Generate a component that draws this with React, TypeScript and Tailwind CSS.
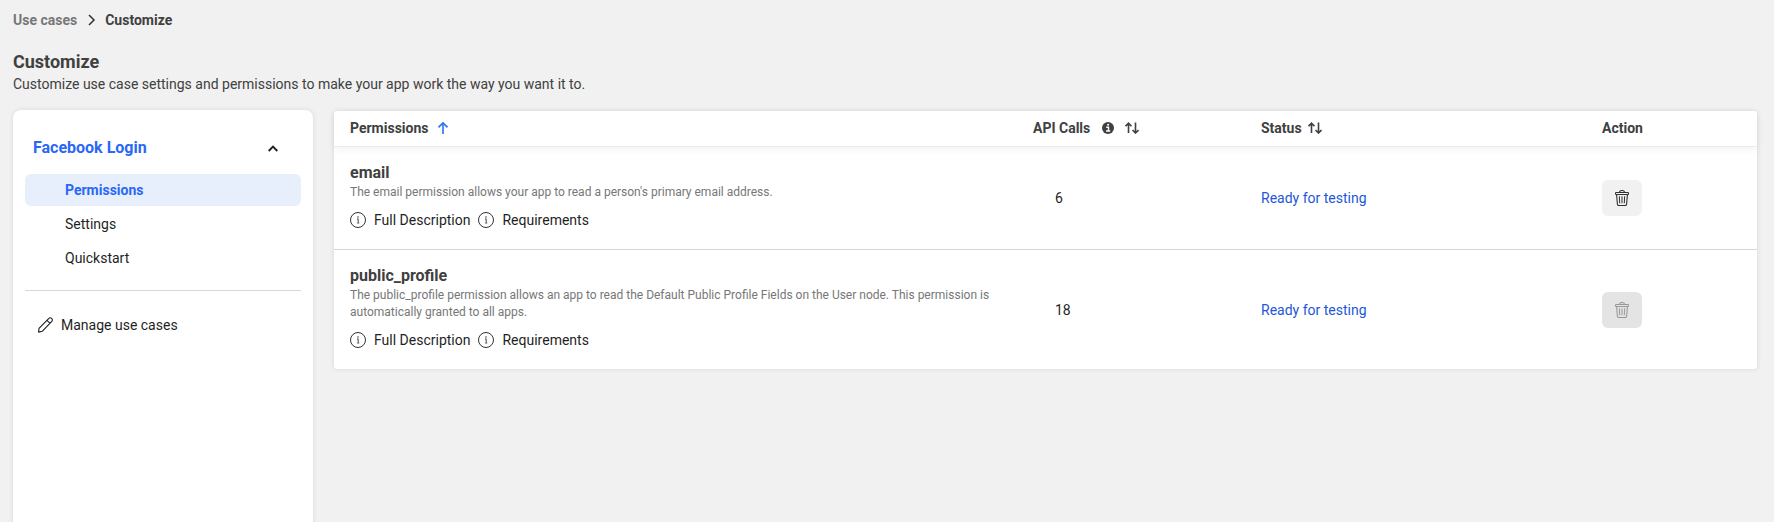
import type { ReactNode } from "react";

function InfoOutline() {
  return (
    <svg width="16" height="16" viewBox="0 0 16 16" fill="none" className="shrink-0 text-[#333]">
      <circle cx="8" cy="8" r="7.5" stroke="currentColor" />
      <path d="M7 6.9h1.2v4.4" stroke="currentColor" strokeWidth="0.9" />
      <path d="M6.8 11.1h2.6" stroke="currentColor" strokeWidth="0.5" />
      <circle cx="8" cy="4.9" r="0.75" fill="currentColor" />
    </svg>
  );
}

function InfoSolid() {
  return (
    <svg width="12" height="12" viewBox="0 0 12 12" className="shrink-0">
      <circle cx="6" cy="6" r="6" fill="#404040" />
      <path d="M4.2 5.2h2.3v3.3M4 9h4.2" stroke="#fff" strokeWidth="1.4" fill="none" />
      <circle cx="6.1" cy="2.8" r="1.05" fill="#fff" />
    </svg>
  );
}

function SortIcon() {
  return (
    <svg width="14" height="12" viewBox="0 0 14 12" fill="none" stroke="#404040" strokeWidth="1.6" className="shrink-0">
      <path d="M3.5 11V1.2M0.5 4.2L3.5 1.2L6.5 4.2M10.5 0.5v10.5M7.5 8l3 3l3-3" />
    </svg>
  );
}

function TrashIcon() {
  return (
    <svg width="14" height="16" viewBox="0 0 14 16" fill="none" stroke="currentColor" strokeLinejoin="round">
      <path d="M4.4 2.3C4.6 1 5.5 0.5 7 0.5S9.4 1 9.6 2.3" strokeWidth="1.1" />
      <rect x="0.5" y="2.5" width="13" height="2" rx="0.6" strokeWidth="1.1" />
      <path d="M1.6 4.6l0.8 9.6q0.1 1.3 1.3 1.3h6.6q1.2 0 1.3-1.3l0.8-9.6" strokeWidth="1.1" />
      <path d="M4.4 6.3l0.3 7M7 6.3v7M9.6 6.3l-0.3 7" />
    </svg>
  );
}

function Link({ children }: { children: ReactNode }) {
  return (
    <span className="flex items-center gap-2 text-[#1f1f1f]">
      <InfoOutline />
      {children}
    </span>
  );
}

const columns = "grid grid-cols-[699px_212px_341px_1fr] pl-4";

type Permission = { name: string; text: string; calls: number; locked: boolean; height: string };

const permissions: Permission[] = [
  {
    name: "email",
    text: "The email permission allows your app to read a person's primary email address.",
    calls: 6,
    locked: false,
    height: "h-[103px] border-b border-[#d6d6d6]",
  },
  {
    name: "public_profile",
    text: "The public_profile permission allows an app to read the Default Public Profile Fields on the User node. This permission is automatically granted to all apps.",
    calls: 18,
    locked: true,
    height: "h-[119px] pt-px",
  },
];

function Row({ name, text, calls, locked, height }: Permission) {
  return (
    <div className={`${columns} ${height} items-center`}>
      <div className={`self-start ${locked ? "pt-[15px]" : "pt-4"}`}>
        <div className="text-base leading-5 font-bold text-[#404040]">{name}</div>
        <div className="mt-px max-w-[660px] text-xs leading-[17px] text-[#777]">{text}</div>
        <div className="mt-[9px] flex gap-2 leading-5">
          <Link>Full Description</Link>
          <Link>Requirements</Link>
        </div>
      </div>
      <div className="pl-[6px] text-[#1f1f1f]">{calls}</div>
      <div className="text-[#1c58d9]">Ready for testing</div>
      <button
        className={`flex h-9 w-10 items-center justify-center rounded-md ${
          locked ? "bg-[#e4e4e4] text-[#999]" : "bg-[#f1f1f1] text-[#303030]"
        }`}
      >
        <TrashIcon />
      </button>
    </div>
  );
}

export default function App() {
  return (
    <div className="h-[522px] overflow-hidden bg-[#f1f1f1] pt-[10px] pl-[13px] font-['Roboto',sans-serif] text-sm leading-5 text-[#404040]">
      <nav className="flex items-center font-bold">
        <span className="text-[#777]">Use cases</span>
        <svg width="8" height="12" viewBox="0 0 8 12" fill="none" stroke="#333" strokeWidth="1.5" className="mr-[9px] ml-[11px]">
          <path d="M1 1l5 5l-5 5" />
        </svg>
        <span>Customize</span>
      </nav>
      <h1 className="mt-5 text-lg leading-6 font-bold">Customize</h1>
      <p>Customize use case settings and permissions to make your app work the way you want it to.</p>

      <div className="mt-4 flex items-start gap-[21px]">
        <aside className="h-[440px] w-[300px] rounded-lg bg-white px-3 pt-7 shadow-[0_0_5px_rgba(0,0,0,0.1)]">
          <div className="flex items-center justify-between pr-[23px] pl-2 text-base leading-5 font-bold text-[#2a67f5]">
            Facebook Login
            <svg width="10" height="7" viewBox="0 0 10 7" fill="none" stroke="#222" strokeWidth="1.9">
              <path d="M0.7 6L5 1.6L9.3 6" />
            </svg>
          </div>
          <div className="mt-4 flex flex-col gap-[2px] text-[#1f1f1f]">
            <div className="flex h-8 items-center rounded-md bg-[#e7effd] pl-10 font-bold text-[#2a67f5]">Permissions</div>
            <div className="flex h-8 items-center pl-10">Settings</div>
            <div className="flex h-8 items-center pl-10">Quickstart</div>
          </div>
          <div className="mt-4 h-px bg-[#d6d6d6]" />
          <div className="mt-6 flex items-center gap-2 pl-[13px] text-[#1f1f1f]">
            <svg width="15" height="16" viewBox="0 0 15 16" fill="none" stroke="currentColor" strokeWidth="1.1" strokeLinejoin="round">
              <path d="M0.6 15.1L1 11.4L10.9 1.4Q12.2 0.2 13.6 1.4T13.8 4.4L4.2 14.3Z M8.9 3.4l3.2 3" />
            </svg>
            Manage use cases
          </div>
        </aside>

        <main className="mt-[1px] w-[1423px] rounded-[3px] bg-white shadow-[0_0_5px_rgba(0,0,0,0.11)]">
          <div
            className={`${columns} h-9 items-center border-b border-[#ebebeb] pb-[2px] font-bold shadow-[0_3px_8px_rgba(0,0,0,0.05)]`}
          >
            <div className="flex items-center gap-[10px]">
              Permissions
              <svg width="10" height="12" viewBox="0 0 10 12" fill="none" stroke="#3578f6" strokeWidth="1.7">
                <path d="M5 12V1M0.5 5.3L5 0.9L9.5 5.3" />
              </svg>
            </div>
            <div className="flex items-center">
              <span className="-ml-4 mr-3">API Calls</span>
              <InfoSolid />
              <span className="ml-[11px]">
                <SortIcon />
              </span>
            </div>
            <div className="flex items-center gap-[6px]">
              Status
              <SortIcon />
            </div>
            <div>Action</div>
          </div>
          {permissions.map((p) => (
            <Row key={p.name} {...p} />
          ))}
        </main>
      </div>
    </div>
  );
}
